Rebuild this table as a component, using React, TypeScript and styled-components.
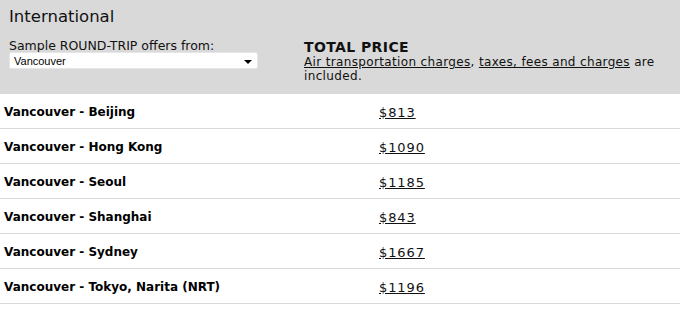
import React from 'react'
import styled, { createGlobalStyle } from 'styled-components'

const offers = [
  { route: 'Vancouver - Beijing', price: '$813' },
  { route: 'Vancouver - Hong Kong', price: '$1090' },
  { route: 'Vancouver - Seoul', price: '$1185' },
  { route: 'Vancouver - Shanghai', price: '$843' },
  { route: 'Vancouver - Sydney', price: '$1667' },
  { route: 'Vancouver - Tokyo, Narita (NRT)', price: '$1196' },
]

const App = () => {
  return (
    <Page>
      <GlobalStyle />
      <Header>
        <Title>International</Title>
        <Controls>
          <FromBlock>
            <Label>Sample ROUND-TRIP offers from:</Label>
            <Select>
              <span>Vancouver</span>
              <Arrow />
            </Select>
          </FromBlock>
          <PriceNote>
            <NoteTitle>TOTAL PRICE</NoteTitle>
            <NoteText>
              <a href="#">Air transportation charges</a>, <a href="#">taxes, fees and charges</a> are
              included.
            </NoteText>
          </PriceNote>
        </Controls>
      </Header>
      <List>
        {offers.map((o) => (
          <Row key={o.route}>
            <Route>{o.route}</Route>
            <Price href="#">{o.price}</Price>
          </Row>
        ))}
      </List>
    </Page>
  )
}

export default App

const GlobalStyle = createGlobalStyle`
    body {
        margin: 0;
        background: #fff;
        font-family: "DejaVu Sans", Verdana, sans-serif;
        color: #000;
    }
`
const Page = styled.div`
    width: 680px;
`
const Header = styled.div`
    background-color: #d9d9d9;
    height: 94px;
    box-sizing: border-box;
    padding: 7px 0 0 9px;
`
const Title = styled.div`
    font-size: 16.5px;
    line-height: 20px;
    color: #111;
`
const Controls = styled.div`
    display: flex;
    margin-top: 13px;
`
const FromBlock = styled.div`
    width: 295px;
    flex-shrink: 0;
    display: flex;
    flex-direction: column;
`
const Label = styled.div`
    font-size: 12.5px;
    line-height: 12px;
    color: #111;
`
const Select = styled.div`
    width: 249px;
    height: 17px;
    box-sizing: border-box;
    background: #fff;
    border: 1px solid #e6e6e6;
    border-radius: 2px;
    display: flex;
    align-items: center;
    justify-content: space-between;
    padding: 0 5px 0 4px;
    font-family: "Liberation Sans", Arial, sans-serif;
    font-size: 11px;
    color: #000;
`
const Arrow = styled.span`
    width: 0;
    height: 0;
    border-left: 4px solid transparent;
    border-right: 4px solid transparent;
    border-top: 4px solid #000;
    margin-top: 2px;
`
const PriceNote = styled.div`
    display: flex;
    flex-direction: column;
`
const NoteTitle = styled.div`
    font-size: 14px;
    font-weight: bold;
    letter-spacing: 0.4px;
    line-height: 14px;
    color: #111;
`
const NoteText = styled.div`
    margin-top: 1px;
    font-size: 12px;
    letter-spacing: 0.35px;
    line-height: 14px;
    color: #111;
    a {
        color: #111;
        text-decoration: underline;
    }
`
const List = styled.div`
    display: flex;
    flex-direction: column;
`
const Row = styled.div`
    display: flex;
    align-items: center;
    height: 35px;
    padding-top: 2px;
    box-sizing: border-box;
    border-bottom: 1px solid #d9d9d9;
`
const Route = styled.div`
    width: 375px;
    padding-left: 4px;
    font-size: 12px;
    font-weight: bold;
    color: #000;
`
const Price = styled.a`
    font-size: 13px;
    letter-spacing: 0.9px;
    color: #111;
    text-decoration: underline;
`
